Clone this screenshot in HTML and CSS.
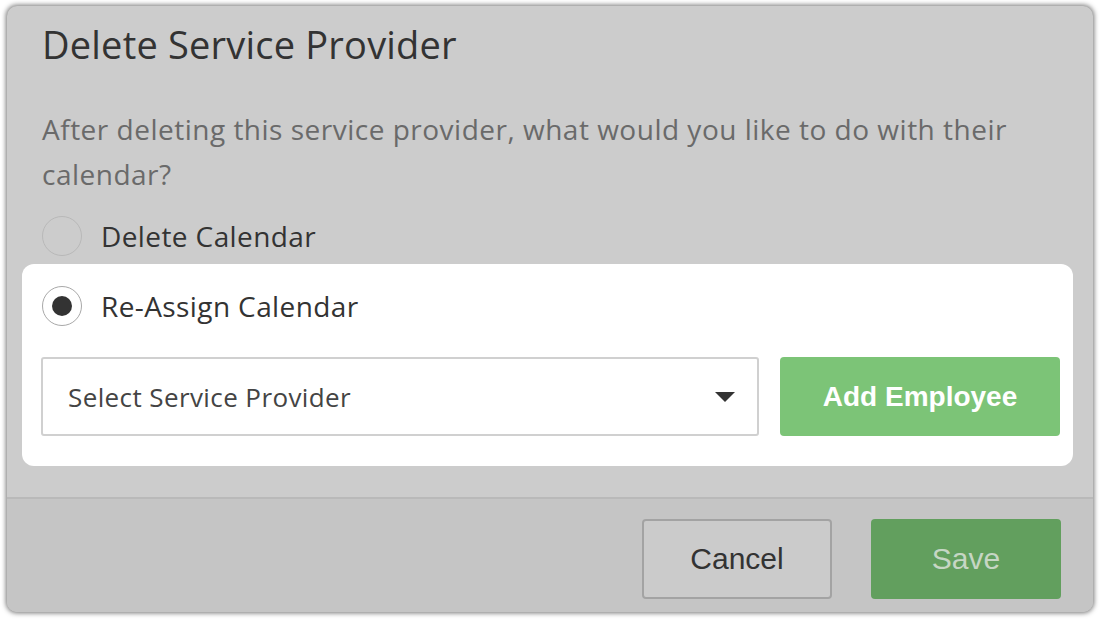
FILE: index.html
```html
<!DOCTYPE html>
<html lang="en">

<head>
    <meta charset="UTF-8">
    <meta name="viewport" content="width=device-width, initial-scale=1.0">
    <title>Delete Service Provider</title>
    <link rel="stylesheet" href="styles.css">
</head>

<body>
    <div class="modal">
        <div class="modal-body">
            <h1 class="modal-title">Delete Service Provider</h1>
            <p class="question">After deleting this service provider, what would you like to do with their calendar?</p>

            <label class="option">
                <span class="radio"></span>
                <span class="option-label">Delete Calendar</span>
            </label>

            <div class="reassign">
                <label class="option">
                    <span class="radio checked"></span>
                    <span class="option-label">Re-Assign Calendar</span>
                </label>
                <div class="reassign-row">
                    <div class="select">
                        <span>Select Service Provider</span>
                        <span class="caret"></span>
                    </div>
                    <button class="btn-add">Add Employee</button>
                </div>
            </div>
        </div>

        <div class="modal-footer">
            <button class="btn-cancel">Cancel</button>
            <button class="btn-save">Save</button>
        </div>
    </div>
</body>

</html>
```

FILE: styles.css
```css
body, html {
    margin: 0;
    padding: 0;
    background-color: #ffffff;
    font-family: 'Open Sans', 'Lato', sans-serif;
}

body {
    padding: 6px 8px 7px 7px;
}

.modal {
    width: 1086px;
    height: 606px;
    background-color: #cccccc;
    border-radius: 10px;
    box-shadow: 0 0 5px 1px rgba(0, 0, 0, 0.55);
    display: flex;
    flex-direction: column;
    overflow: hidden;
}

.modal-body {
    flex: 1;
    padding: 0 20px 0 15px;
}

.modal-title {
    margin: 16px 0 0 20px;
    font-size: 38px;
    font-weight: 400;
    line-height: 44px;
    letter-spacing: 0.2px;
    color: #333333;
}

.question {
    margin: 41px 0 0 20px;
    font-size: 28px;
    line-height: 45px;
    letter-spacing: 0.5px;
    color: #6a6a6a;
}

.option {
    display: flex;
    align-items: center;
    gap: 19px;
    margin: 18px 0 0 20px;
    height: 42px;
}

.radio {
    width: 40px;
    height: 40px;
    border: 1px solid #b8b8b8;
    border-radius: 50%;
    box-sizing: border-box;
    position: relative;
}

.radio.checked {
    border-color: #a8a8a8;
    background-color: #ffffff;
}

.radio.checked::after {
    content: "";
    position: absolute;
    left: 9px;
    top: 9px;
    width: 20px;
    height: 20px;
    border-radius: 50%;
    background-color: #333333;
}

.option-label {
    font-size: 28px;
    letter-spacing: 0.4px;
    color: #333333;
}

.reassign {
    margin-top: 7px;
    background-color: #ffffff;
    border-radius: 12px;
    padding: 21px 13px 30px 0;
}

.reassign .option {
    margin: 0 0 0 20px;
}

.reassign-row {
    display: flex;
    gap: 21px;
    margin: 30px 0 0 19px;
}

.select {
    flex: 1;
    height: 79px;
    border: 2px solid #d0d0d0;
    border-radius: 3px;
    box-sizing: border-box;
    display: flex;
    align-items: center;
    justify-content: space-between;
    padding: 0 22px 0 25px;
    font-size: 26px;
    letter-spacing: 0.4px;
    color: #444444;
}

.caret {
    width: 0;
    height: 0;
    border-left: 10px solid transparent;
    border-right: 10px solid transparent;
    border-top: 10px solid #333333;
}

button {
    font-family: 'Liberation Sans', Arial, sans-serif;
    border-radius: 4px;
    cursor: pointer;
}

.btn-add {
    width: 280px;
    height: 79px;
    border: none;
    background-color: #7cc477;
    color: #ffffff;
    font-size: 28px;
    font-weight: 700;
}

.modal-footer {
    height: 115px;
    background-color: #c5c5c5;
    border-top: 2px solid #b9b9b9;
    display: flex;
    justify-content: flex-end;
    align-items: flex-start;
    gap: 39px;
    padding: 20px 32px 0 0;
    box-sizing: border-box;
}

.btn-cancel {
    width: 190px;
    height: 80px;
    border: 2px solid #a3a3a3;
    background-color: #cbcbcb;
    color: #333333;
    font-size: 30px;
}

.btn-save {
    width: 190px;
    height: 80px;
    border: none;
    background-color: #629f5e;
    color: #c6d6c4;
    font-size: 30px;
}
```
